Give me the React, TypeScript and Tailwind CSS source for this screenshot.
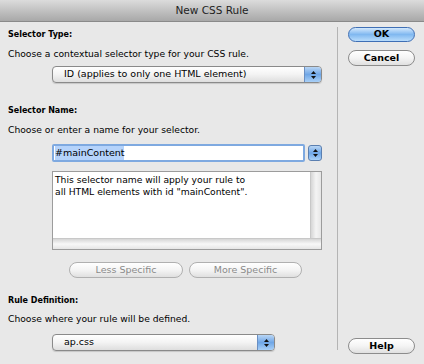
const font = { fontFamily: '"DejaVu Sans", "Liberation Sans", sans-serif' }

const Stepper = ({ className = "" }: { className?: string }) => (
    <div className={`flex flex-col items-center justify-center gap-[2px] rounded-[3px] bg-gradient-to-b from-[#b9d6f5] via-[#6fa6e6] to-[#a9d0f7] border border-[#5b7fb0] ${className}`}>
        <svg width="5" height="3" viewBox="0 0 5 3"><path d="M2.5 0 L5 3 L0 3 Z" fill="#111" /></svg>
        <svg width="5" height="3" viewBox="0 0 5 3"><path d="M0 0 L5 0 L2.5 3 Z" fill="#111" /></svg>
    </div>
)

const Popup = ({ label, width }: { label: string; width: string }) => (
    <div className={`flex h-[17px] ${width} rounded-[4px] border border-[#8a8a8a] bg-gradient-to-b from-white via-[#f3f3f3] to-[#dedede] shadow-[0_1px_1px_rgba(0,0,0,0.15)] overflow-hidden`}>
        <div className="flex-1 flex items-center pl-[11px] text-[9.5px] text-black">{label}</div>
        <Stepper className="w-[17px] rounded-none border-0 border-l border-l-[#6a8fc2]" />
    </div>
)

const Pill = ({ label, className = "" }: { label: string; className?: string }) => (
    <div className={`flex items-center justify-center h-[16px] rounded-full border border-[#8c8c8c] bg-gradient-to-b from-white via-[#f4f4f4] to-[#e0e0e0] text-[9.5px] font-bold ${className}`}>
        {label}
    </div>
)

const App = () => {
    return (
        <div style={font} className="w-[424px] h-[364px] bg-[#e8e8e8] flex flex-col text-black">
            <div className="h-[22px] flex items-center justify-center bg-gradient-to-b from-[#dcdcdc] to-[#a8a8a8] border-b border-[#8a8a8a] text-[10.5px] text-[#1e1e1e]">
                New CSS Rule
            </div>
            <div className="flex flex-1">
                <div className="w-[337px] pl-[8px] pt-[7px]">
                    <div className="text-[8px] font-bold h-[12px] leading-[12px]">Selector Type:</div>
                    <div className="mt-[6px] text-[9.2px] h-[14px] leading-[14px]">Choose a contextual selector type for your CSS rule.</div>
                    <div className="mt-[5px] ml-[44px]">
                        <Popup label="ID (applies to only one HTML element)" width="w-[270px]" />
                    </div>
                    <div className="mt-[22px] text-[8px] font-bold h-[12px] leading-[12px]">Selector Name:</div>
                    <div className="mt-[6px] text-[9.2px] h-[14px] leading-[14px]">Choose or enter a name for your selector.</div>
                    <div className="mt-[7px] ml-[44px] flex items-center gap-[3px]">
                        <div className="w-[253px] h-[18px] border-2 border-[#7ea9e0] bg-white flex items-center pl-[1px] text-[9.5px] rounded-[2px]">
                            <span className="bg-[#b5d3fb]">#mainContent</span>
                        </div>
                        <Stepper className="w-[14px] h-[16px]" />
                    </div>
                    <div className="mt-[9px] ml-[44px] w-[270px] h-[79px] border border-[#9c9c9c] bg-white flex flex-col">
                        <div className="flex flex-1">
                            <div className="flex-1 pl-[2px] pt-[2px] text-[9.2px] leading-[12px]">
                                This selector name will apply your rule to<br />all HTML elements with id "mainContent".
                            </div>
                            <div className="w-[11px] bg-gradient-to-r from-[#d6d6d6] via-[#f4f4f4] to-[#e6e6e6] border-l border-[#c8c8c8]" />
                        </div>
                        <div className="h-[11px] bg-gradient-to-b from-[#d6d6d6] via-[#f8f8f8] to-[#e6e6e6] border-t border-[#c8c8c8]" />
                    </div>
                    <div className="mt-[12px] ml-[61px] flex gap-[6px]">
                        <Pill label="Less Specific" className="w-[114px] font-normal border-[#b0b0b0] text-[#8a8a8a]" />
                        <Pill label="More Specific" className="w-[113px] font-normal border-[#b0b0b0] text-[#8a8a8a]" />
                    </div>
                    <div className="mt-[17px] text-[8px] font-bold h-[12px] leading-[12px]">Rule Definition:</div>
                    <div className="mt-[5px] text-[9.2px] h-[14px] leading-[14px]">Choose where your rule will be defined.</div>
                    <div className="mt-[8px] ml-[44px]">
                        <Popup label="ap.css" width="w-[223px]" />
                    </div>
                </div>
                <div className="w-px bg-[#b4b4b4] mt-[5px] mb-[14px]" />
                <div className="flex-1 flex flex-col items-center pt-[5px] pl-[1px]">
                    <div className="w-[67px] h-[15px] rounded-full border border-[#3f6fb5] bg-gradient-to-b from-[#d3e8fc] via-[#80b8f0] to-[#b9dcfb] flex items-center justify-center text-[9.5px] font-bold">
                        OK
                    </div>
                    <Pill label="Cancel" className="mt-[8px] w-[67px] h-[16px]" />
                    <div className="flex-1" />
                    <Pill label="Help" className="mb-[10px] w-[67px] h-[16px]" />
                </div>
            </div>
        </div>
    )
}

export default App
